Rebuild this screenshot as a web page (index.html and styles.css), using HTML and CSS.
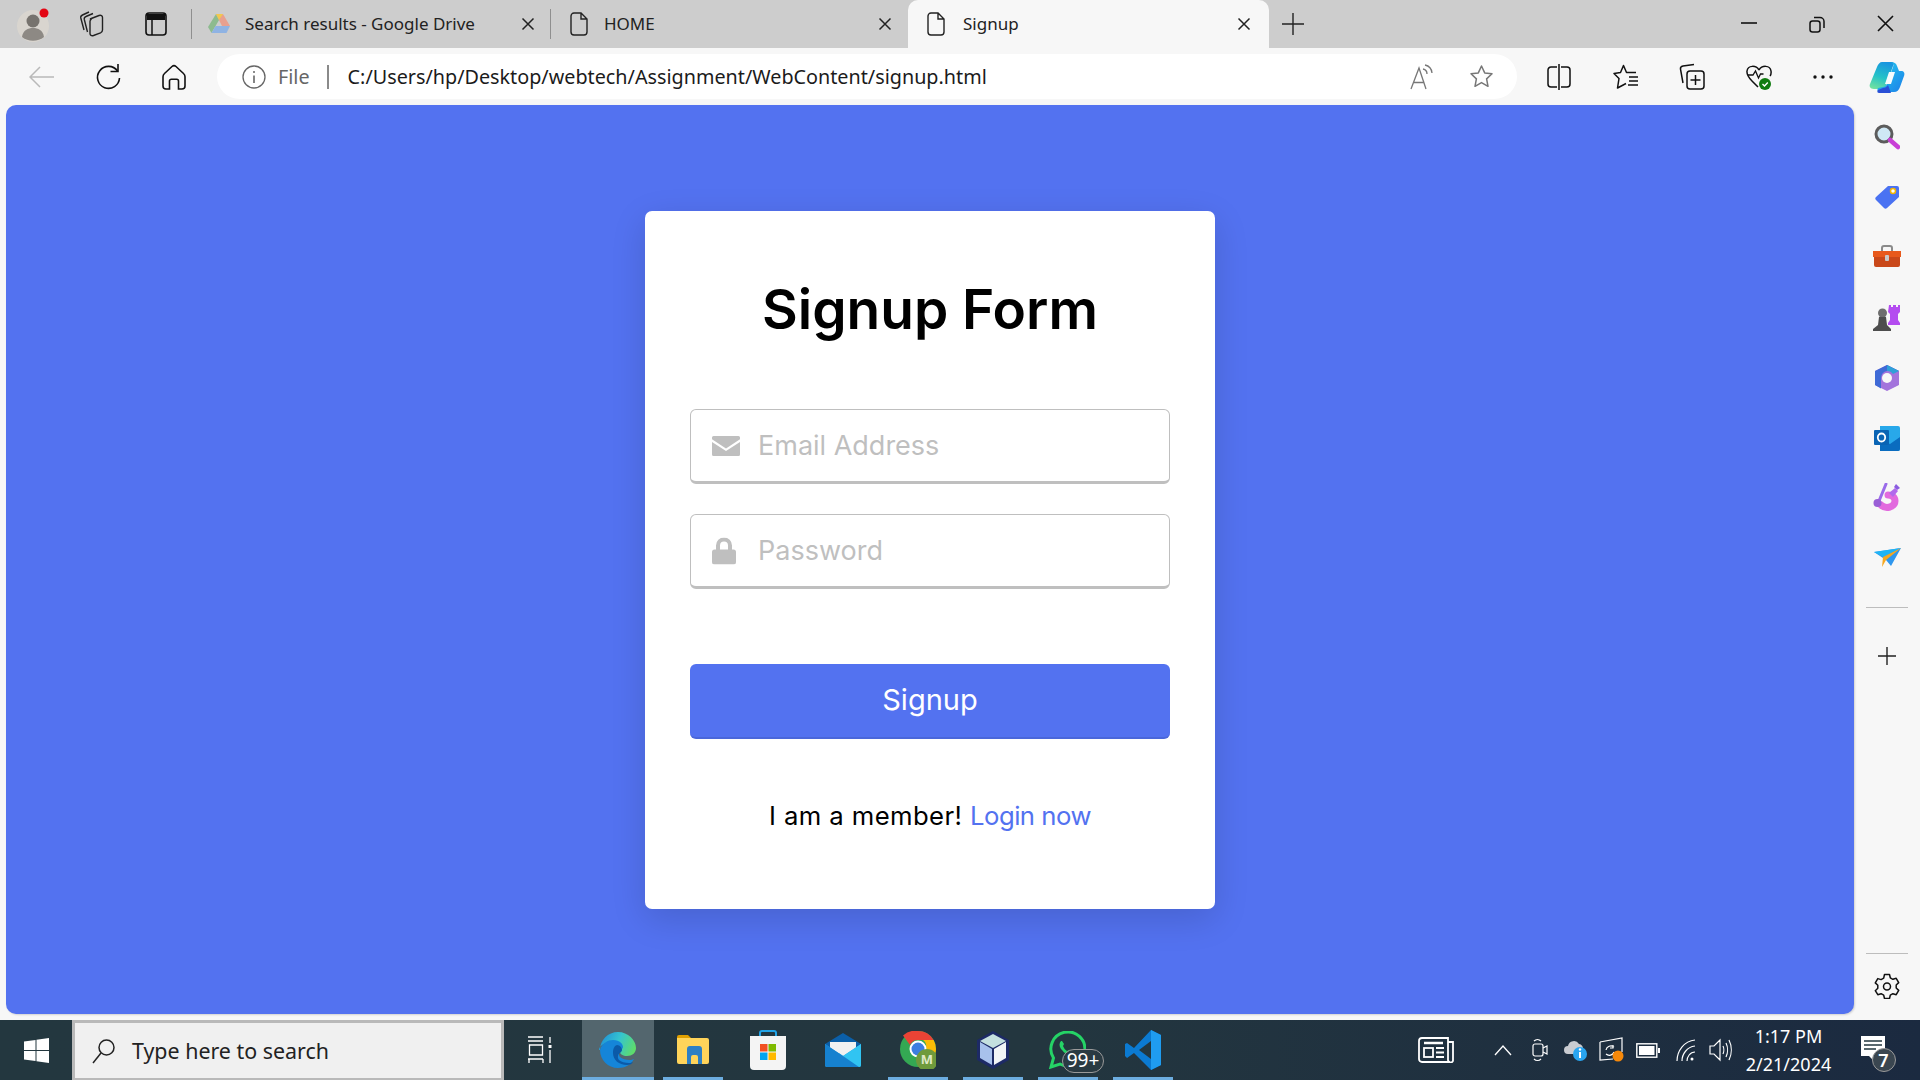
FILE: index.html
```html
<!DOCTYPE html>
<html lang="en">
<head>
	<meta charset="UTF-8">
	<link rel="stylesheet" href="styles.css">
	<title>Signup</title>
</head>
<body>
	<div class="tabstrip">
		<div class="strip-btn profile">
			<svg width="40" height="40" viewBox="0 0 40 40"><circle cx="19" cy="22" r="16" fill="#d9d5cf"/><circle cx="19" cy="17" r="6.5" fill="#77736e"/><path d="M8 33c1-7 6-9 11-9s10 2 11 9c-6 5-16 5-22 0z" fill="#8d8984"/><circle cx="30" cy="9" r="4.5" fill="#e30613"/></svg>
		</div>
		<div class="strip-btn collections-btn">
			<svg width="26" height="27" viewBox="0 0 26 27" fill="none" stroke="#222" stroke-width="1.400"><path d="M11 8l9-3.500c2-.7 3.500.3 3.500 2V19c0 1.500-.8 2.300-2 2.800l-7 2.700c-2 .7-3.500-.3-3.500-2V10.500c0-1.200.5-2 1.500-2.500z"/><path d="M14 2.500 7 5.500c-1.500.6-2 1.600-1.700 3L8.500 21"/><path d="M10 1 3.500 4C2 4.700 1.500 5.700 1.800 7L5 19"/></svg>
		</div>
		<div class="strip-btn vtabs-btn">
			<svg width="24" height="26" viewBox="0 0 24 26"><rect x="2" y="2" width="20" height="22" rx="3" fill="none" stroke="#111" stroke-width="1.600"/><path d="M3 3h18v6H3z" fill="#111"/><path d="M8 9v15" stroke="#111" stroke-width="1.500"/></svg>
		</div>
		<div class="tab-sep"></div>
		<div class="tab tab-drive">
			<svg class="tab-icon" width="24" height="22" viewBox="0 0 24 22"><path d="M16 1l7 12h-8L9 1z" fill="#e8a08f"/><path d="M9 1 1 14l3.500 6L12 7z" fill="#8dbb8f"/><path d="M9 1h7l-4 6z" fill="#f2c84f"/><path d="M4.500 20h15l3.500-7H8.500z" fill="#8fb3e3"/></svg>
			<span class="tab-title">Search results - Google Drive</span>
			<svg class="tab-x" width="14" height="14" viewBox="0 0 14 14"><path d="M1.500 1.500l11 11m0-11l-11 11" stroke="#222" stroke-width="1.500"/></svg>
		</div>
		<div class="tab-sep"></div>
		<div class="tab tab-home">
			<svg class="tab-icon doc" width="18" height="24" viewBox="0 0 18 24"><path d="M4 1h7l6 6v13a3 3 0 0 1-3 3H4a3 3 0 0 1-3-3V4a3 3 0 0 1 3-3zM11 1v6h6" fill="none" stroke="#222" stroke-width="1.400"/></svg>
			<span class="tab-title">HOME</span>
			<svg class="tab-x" width="14" height="14" viewBox="0 0 14 14"><path d="M1.500 1.500l11 11m0-11l-11 11" stroke="#222" stroke-width="1.500"/></svg>
		</div>
		<div class="tab tab-active">
			<svg class="tab-icon doc" width="18" height="24" viewBox="0 0 18 24"><path d="M4 1h7l6 6v13a3 3 0 0 1-3 3H4a3 3 0 0 1-3-3V4a3 3 0 0 1 3-3zM11 1v6h6" fill="none" stroke="#222" stroke-width="1.400"/></svg>
			<span class="tab-title">Signup</span>
			<svg class="tab-x" width="14" height="14" viewBox="0 0 14 14"><path d="M1.500 1.500l11 11m0-11l-11 11" stroke="#222" stroke-width="1.500"/></svg>
		</div>
		<div class="new-tab">
			<svg width="22" height="22" viewBox="0 0 22 22"><path d="M11 0v22M0 11h22" stroke="#222" stroke-width="1.400"/></svg>
		</div>
		<div class="win-controls">
			<div class="win-btn"><svg width="16" height="16" viewBox="0 0 16 16"><path d="M0 8h16" stroke="#111" stroke-width="1.600"/></svg></div>
			<div class="win-btn"><svg width="16" height="18" viewBox="0 0 16 18" fill="none" stroke="#111" stroke-width="1.500"><rect x="1" y="6" width="10" height="11" rx="2.500"/><path d="M5 2.500h6a4 4 0 0 1 4 4V13"/></svg></div>
			<div class="win-btn"><svg width="17" height="17" viewBox="0 0 17 17"><path d="M1 1l15 15m0-15L1 16" stroke="#111" stroke-width="1.600"/></svg></div>
		</div>
	</div>

	<div class="toolbar">
		<div class="tool-btn back"><svg width="26" height="24" viewBox="0 0 26 24" fill="none" stroke="#b9b9b9" stroke-width="1.500"><path d="M25 12H1M11 2 1 12l10 10"/></svg></div>
		<div class="tool-btn refresh"><svg width="26" height="28" viewBox="0 0 26 28" fill="none" stroke="#111" stroke-width="1.600"><path d="M22.500 8A11 11 0 1 0 24.500 15"/><path d="M23 1v7.500h-7.500"/></svg></div>
		<div class="tool-btn home"><svg width="24" height="26" viewBox="0 0 24 26" fill="none" stroke="#111" stroke-width="1.600"><path d="M10 2.500 2.500 9.500c-.9.800-1.500 2-1.500 3.200V22c0 1.600 1.200 3 3 3h3.500v-8c0-1 .8-1.800 1.800-1.800h5.400c1 0 1.800.8 1.800 1.800v8H20c1.800 0 3-1.400 3-3v-9.300c0-1.200-.6-2.400-1.500-3.200L14 2.500c-1.200-1-2.800-1-4 0z"/></svg></div>
		<div class="addressbar">
			<svg class="addr-info" width="24" height="24" viewBox="0 0 24 24" fill="none" stroke="#666" stroke-width="1.300"><circle cx="12" cy="12" r="11"/><path d="M12 10.500v7.500" stroke-width="1.600"/><circle cx="12" cy="7" r="1" fill="#666" stroke="none"/></svg>
			<span class="addr-file">File</span>
			<span class="addr-sep"></span>
			<span class="addr-url">C:/Users/hp/Desktop/webtech/Assignment/WebContent/signup.html</span>
			<svg class="addr-read" width="24" height="28" viewBox="0 0 24 28" fill="none" stroke="#777" stroke-width="1.300"><path d="M1 26 9 5l7 21M3.500 19.500h11"/><path d="M13 6a5 5 0 0 1 4 5M15 2a9 9 0 0 1 7 8" /></svg>
			<svg class="addr-star" width="25" height="25" viewBox="0 0 25 25" fill="none" stroke="#777" stroke-width="1.500"><path d="M12.500 2l3.200 6.900 7.300.9-5.400 5.100 1.400 7.400-6.500-3.700L6 22.300l1.400-7.400L2 9.800l7.300-.9z" stroke-linejoin="round"/></svg>
		</div>
		<div class="tool-btn split"><svg width="24" height="26" viewBox="0 0 24 26" fill="none" stroke="#111" stroke-width="1.500"><path d="M10 3H4a3 3 0 0 0-3 3v14a3 3 0 0 0 3 3h6M14 3h6a3 3 0 0 1 3 3v14a3 3 0 0 1-3 3h-6M12 0v26"/></svg></div>
		<div class="tool-btn favs"><svg width="26" height="26" viewBox="0 0 26 26" fill="none" stroke="#111" stroke-width="1.500" stroke-linejoin="round"><path d="M23 8.500h-9.500l-3-7-3 7-6.500 1 5 5-1.500 9.500 8.500-4.500"/><path d="M16 13h9M16 17h9M15 21h10"/></svg></div>
		<div class="tool-btn colls"><svg width="26" height="28" viewBox="0 0 26 28" fill="none" stroke="#111" stroke-width="1.500"><path d="M15 1.500 4 3C2.500 3.300 1.200 4.500 1.500 6.200L4 20"/><rect x="8" y="8" width="17" height="18" rx="3"/><path d="M16.500 12v10M11.500 17h10"/></svg></div>
		<div class="tool-btn health"><svg width="26" height="28" viewBox="0 0 26 28"><path d="M13 7C10 2 2 2 1 8c-.5 4 2 7 5 10l6 6M13 7c3-5 11-5 12 1 .3 2-.2 4-1 5" fill="none" stroke="#111" stroke-width="1.500"/><path d="M2 12h5l2.500-4 3 7 2-4h3" fill="none" stroke="#111" stroke-width="1.300"/><circle cx="19" cy="21" r="6" fill="#107c10"/><path d="M16.500 21l2 2 3.300-3.500" fill="none" stroke="#fff" stroke-width="1.400"/></svg></div>
		<div class="tool-btn dots"><svg width="20" height="4" viewBox="0 0 20 4" fill="#111"><circle cx="2" cy="2" r="1.700"/><circle cx="10" cy="2" r="1.700"/><circle cx="18" cy="2" r="1.700"/></svg></div>
		<div class="tool-btn copilot"><svg width="36" height="34" viewBox="0 0 36 34"><defs><linearGradient id="cp1" x1=".6" y1="0" x2=".3" y2="1"><stop offset="0" stop-color="#1895e0"/><stop offset=".55" stop-color="#25c2c8"/><stop offset="1" stop-color="#6fe0a0"/></linearGradient><linearGradient id="cp2" x1="0" y1="0" x2="1" y2="1"><stop offset="0" stop-color="#0f77b8"/><stop offset=".35" stop-color="#22b4ee"/><stop offset="1" stop-color="#1c7ee8"/></linearGradient></defs><path d="M13 2h9c3 0 3 2 2 4L17 26c-1 2-3 3-5 3H5c-4 0-5-3-4-5L8 7c1-3 3-5 5-5z" fill="url(#cp1)"/><path d="M22 2c3 0 5 1 6 4l2 5h2c3 0 4 2 3 5l-4 11c-1 3-3 5-6 5H11c-3 0-3-2-2-4l5-1c2 0 3-1 4-3L24 7c1-2 0-4-2-5z" fill="url(#cp2)"/><path d="M9 30l5-2c2 0 4-1 5-3l3 8H11c-3 0-3-1-2-3z" fill="#2a4fd6"/><path d="M20 12h6l-4 12h-6z" fill="#f7fbfd"/></svg></div>
	</div>

	<div class="workspace">
		<div class="page">
			<div class="card">
				<h1 class="card-title">Signup Form</h1>
				<form class="signup-form">
					<div class="field">
						<svg class="field-icon" width="28" height="20" viewBox="0 0 28 20" fill="#bfbfbf"><path d="M1.500 0h25A1.500 1.500 0 0 1 28 1.500v1.800L14 12.500 0 3.300V1.500A1.500 1.500 0 0 1 1.500 0z"/><path d="M0 6l14 9 14-9v12.500a1.500 1.500 0 0 1-1.500 1.500h-25A1.500 1.500 0 0 1 0 18.500z"/></svg>
						<input class="field-input" type="text" placeholder="Email Address">
					</div>
					<div class="field">
						<svg class="field-icon" width="24" height="27" viewBox="0 0 24 27" fill="#bfbfbf"><path d="M12 0a8 8 0 0 1 8 8v4h1.500a2.500 2.500 0 0 1 2.500 2.500v10a2.500 2.500 0 0 1-2.500 2.500h-19A2.500 2.500 0 0 1 0 24.500v-10A2.500 2.500 0 0 1 2.500 12H4V8a8 8 0 0 1 8-8zm0 4a4 4 0 0 0-4 4v4h8V8a4 4 0 0 0-4-4z"/></svg>
						<input class="field-input" type="password" placeholder="Password">
					</div>
					<button class="signup-btn" type="button">Signup</button>
				</form>
				<p class="member-text">I am a member! <a href="#">Login now</a></p>
			</div>
		</div>

		<div class="sidebar">
			<div class="side-btn"><svg width="26" height="26" viewBox="0 0 26 26"><circle cx="10" cy="10" r="8" fill="#cfe8f5" stroke="#5c5c5c" stroke-width="3"/><path d="M16 16l8 7" stroke="#c83fd6" stroke-width="4.500" stroke-linecap="round"/></svg></div>
			<div class="side-btn"><svg width="26" height="26" viewBox="0 0 26 26"><path d="M14 2h9a2 2 0 0 1 2 2v9L13 24c-1 1-2 1-3 0l-8-8c-1-1-1-2 0-3z" fill="#4a72f2"/><circle cx="19" cy="7" r="2.500" fill="#fff" stroke="#f4b400" stroke-width="1.500"/></svg></div>
			<div class="side-btn"><svg width="28" height="24" viewBox="0 0 28 24"><path d="M9 7V3a2 2 0 0 1 2-2h6a2 2 0 0 1 2 2v4" fill="none" stroke="#8a8a8a" stroke-width="2"/><path d="M0 6h28v6H0z" fill="#e8591c"/><path d="M1 12h26v8a2 2 0 0 1-2 2H3a2 2 0 0 1-2-2z" fill="#c9481a"/><rect x="12" y="10" width="4" height="6" rx="1" fill="#c9c9c9"/></svg></div>
			<div class="side-btn"><svg width="28" height="28" viewBox="0 0 28 28"><path d="M16 1h2v2h2V1h3v2h2V1h2v7l-2 2v6l2 3v2H15v-2l2-3v-6l-2-2z" fill="#b44cf0"/><circle cx="9.500" cy="9" r="4.500" fill="#6e6e6e"/><path d="M6 13h7l1 8 4 4v2H0v-2l5-4z" fill="#4d4d4d"/></svg></div>
			<div class="side-btn"><svg width="26" height="28" viewBox="0 0 26 28"><path d="M13 1 1 7v14l12 6 12-6V7z" fill="#a374dc"/><path d="M13 1 1 7v14l6 3.500V14a7 7 0 0 1 6-7l12 0z" fill="#3f6ad6"/><path d="M13 1l12 6-6 3a7 7 0 0 0-6-3z" fill="#2fa0d8"/><circle cx="13" cy="14" r="5" fill="#f7f7f7"/></svg></div>
			<div class="side-btn"><svg width="26" height="26" viewBox="0 0 26 26"><path d="M6 1h18a2 2 0 0 1 2 2v21a2 2 0 0 1-2 2H6z" fill="#28a8ea"/><path d="M6 14l10 5 10-7v12a2 2 0 0 1-2 2H6z" fill="#0a6cbf"/><rect x="0" y="5" width="15" height="15" rx="1" fill="#0a64b4"/><ellipse cx="7.500" cy="12.500" rx="3.700" ry="4" fill="none" stroke="#fff" stroke-width="1.800"/></svg></div>
			<div class="side-btn"><svg width="28" height="30" viewBox="0 0 28 30" fill="none"><path d="M15 12c4 0 7 2 7 6 0 3-2 5-5 6-4 1-7 0-9-2" stroke="#e26ade" stroke-width="7" stroke-linecap="round"/><path d="M13 1 6 18" stroke="#9a6bea" stroke-width="3" stroke-linecap="round"/><circle cx="4.500" cy="20" r="4" fill="#9a5fd6"/><path d="M16 10l6-5 3 3-5 6z" fill="#b169ec"/><path d="M23 1l4 4-3 2-3-3z" fill="#8a5ce0"/></svg></div>
			<div class="side-btn"><svg width="27" height="20" viewBox="0 0 27 20"><path d="M0 4 27 0 17 18l-5-6z" fill="#2f97ee"/><path d="M0 4l27-4L9 9z" fill="#1fb4f5"/><path d="M9 9l18-9-15 12-4 7z" fill="#f6a821"/></svg></div>
			<div class="side-rule"></div>
			<div class="side-btn side-add"><svg width="18" height="18" viewBox="0 0 18 18"><path d="M9 0v18M0 9h18" stroke="#222" stroke-width="1.400"/></svg></div>
			<div class="side-spacer"></div>
			<div class="side-rule side-rule-low"></div>
			<div class="side-btn side-gear"><svg width="26" height="26" viewBox="0 0 26 26" fill="none" stroke="#111" stroke-width="1.500" stroke-linejoin="round"><path d="M10.500 1.500h5l.8 3.300 2.600 1.500 3.300-1 2.500 4.300-2.500 2.400v3l2.500 2.400-2.500 4.300-3.300-1-2.600 1.500-.8 3.300h-5l-.8-3.300-2.600-1.500-3.300 1L1.300 17.700l2.500-2.400v-3L1.300 9.900 3.800 5.600l3.300 1 2.600-1.500z"/><circle cx="13" cy="13.500" r="3.500"/></svg></div>
		</div>
	</div>

	<div class="taskbar">
		<div class="start-btn"><svg width="25" height="25" viewBox="0 0 25 25" fill="#fff"><path d="M0 3.600 11.500 2v10H0zM12.500 1.800 25 0v12H12.500zM0 13h11.500v10L0 21.400zM12.500 13H25v12l-12.500-1.800z"/></svg></div>
		<div class="task-search">
			<svg width="24" height="26" viewBox="0 0 24 26" fill="none" stroke="#222" stroke-width="1.500"><circle cx="14.500" cy="9.500" r="7.500"/><path d="M9 15 1 25"/></svg>
			<span>Type here to search</span>
		</div>
		<div class="task-view"><svg width="24" height="28" viewBox="0 0 24 28" fill="none" stroke="#fff" stroke-width="1.300"><path d="M0 1h15M0 5h15M1.500 9h13v10h-13zM0 23h15M1 23v4M15 23v4M22 1v6M22 14v13"/><rect x="20.500" y="9" width="3" height="3" fill="#fff" stroke="none"/></svg></div>
		<div class="task-app app-open app-current"><svg width="38" height="38" viewBox="0 0 38 38"><defs><linearGradient id="edge1" x1="0" y1=".3" x2="1" y2=".6"><stop offset="0" stop-color="#1f8fd8"/><stop offset=".5" stop-color="#35c4cf"/><stop offset="1" stop-color="#5fdc6a"/></linearGradient></defs><path d="M1 19C1 9 9 1 19 1c10 0 18 8 18 16 0 5-4 8-9 8-4 0-7-2-7-4 0-1 1-1.500 1-3 0-3-3-7-9-7-7 0-13 4-13 8z" fill="url(#edge1)"/><path d="M1 19c2-7 8-10 13-10 7 0 10 4 10 7 0 1-1 2-2 3-2 1-3 4-1 7 2 2 6 3 10 3 1 0 3-.5 4-1-3 6-9 9-16 9C9 37 1 29 1 19z" fill="#1585d8"/><path d="M14 22c0 7 6 12 14 12 3 0 5-1 6-3-1 .5-3 1-4 1-4 0-8-1-10-3-2-3-1-6 1-7 1-1 2-2 2-3 0-2-2-5-5-5-3 1-4 4-4 8z" fill="#0b5aa8"/></svg></div>
		<div class="task-app app-open app-stacked"><svg width="32" height="32" viewBox="0 0 32 32"><path d="M0 3a2 2 0 0 1 2-2h9l3 3h-14z" fill="#e0a000"/><path d="M0 4h30a2 2 0 0 1 2 2v22a2 2 0 0 1-2 2H2a2 2 0 0 1-2-2z" fill="#ffd45a"/><path d="M10 15a3 3 0 0 1 3-3h9a3 3 0 0 1 3 3v15h-4v-7a2 2 0 0 0-2-2h-3a2 2 0 0 0-2 2v7h-4z" fill="#2d7fc4"/></svg></div>
		<div class="task-app"><svg width="36" height="40" viewBox="0 0 36 40"><path d="M10 8V3a2 2 0 0 1 2-2h12a2 2 0 0 1 2 2v5" fill="none" stroke="#21a4e8" stroke-width="2"/><path d="M0 6h36v30a4 4 0 0 1-4 4H4a4 4 0 0 1-4-4z" fill="#f4f4f4"/><rect x="10" y="14" width="7.500" height="7.500" fill="#f25022"/><rect x="18.500" y="14" width="7.500" height="7.500" fill="#7fba00"/><rect x="10" y="22.500" width="7.500" height="7.500" fill="#00a4ef"/><rect x="18.500" y="22.500" width="7.500" height="7.500" fill="#ffb900"/></svg></div>
		<div class="task-app"><svg width="36" height="34" viewBox="0 0 36 34"><path d="M18 0 36 11v3H0v-3z" fill="#0b5fa8"/><path d="M5 9h26v8L18 24 5 17z" fill="#f1f1f1"/><path d="M0 11l18 12 18-12v21a2 2 0 0 1-2 2H2a2 2 0 0 1-2-2z" fill="#2aa8e8"/><path d="M36 11v21a2 2 0 0 1-2 2H18L14 20l4 3z" fill="#31c4f2"/><path d="M0 32V11l18 12L34 34H2a2 2 0 0 1-2-2z" fill="#1681cf"/></svg></div>
		<div class="task-app app-open">
			<svg width="36" height="38" viewBox="0 0 36 38"><circle cx="18" cy="18" r="18" fill="#34a853"/><path d="M18 0a18 18 0 0 1 15.600 9H18a9 9 0 0 0-8 5L3 4.500A18 18 0 0 1 18 0z" fill="#ea4335"/><path d="M33.600 9A18 18 0 0 1 36 18c0 3-1 6-3 9l-7-10a8 8 0 0 0-3-8z" fill="#fbbc05"/><circle cx="18" cy="18" r="8.500" fill="#fff"/><circle cx="18" cy="18" r="6.500" fill="#3c7ee0"/><circle cx="27" cy="29" r="11" fill="#6f9a3c"/><text x="27" y="33" class="chrome-m">M</text></svg>
		</div>
		<div class="task-app app-open"><svg width="34" height="38" viewBox="0 0 34 38"><path d="M17 0 33 9v20l-16 9-16-9V9z" fill="#1d2a66"/><path d="M17 3 30 10 17 17 4 10z" fill="#c5e0df"/><path d="M4 11l12 7v16L4 27z" fill="#a8c1ec"/><path d="M30 11 18 18v16l12-7z" fill="#f2f4f6"/></svg></div>
		<div class="task-app app-open app-badged">
			<svg class="whatsapp" width="38" height="38" viewBox="0 0 38 38"><path d="M3 36l2.500-9A17 17 0 1 1 12 33z" fill="#23373f" stroke="#25d366" stroke-width="3"/><path d="M13 10c-2 2-2 5 0 8l1 1c2 3 5 5 8 5 2 0 3-2 3-3l-4-2-2 1c-2-1-3-3-4-5l1-2-2-3z" fill="#25d366"/></svg>
			<span class="app-badge">99+</span>
		</div>
		<div class="task-app app-open"><svg width="36" height="40" viewBox="0 0 36 40"><path d="M26 0 36 5v30l-10 5-17-17-7 5-2-2V14l2-1 7 5z" fill="#0b7ad1"/><path d="M26 0 36 5v30l-10 5z" fill="#1f9cf0"/><path d="M26 11 14 20l12 9z" fill="#23373f"/></svg></div>
		<div class="tray">
			<svg class="tray-news" width="36" height="26" viewBox="0 0 36 26" fill="none" stroke="#fff" stroke-width="1.800"><path d="M4 1h26v22a2 2 0 0 0 2 2H4a3 3 0 0 1-3-3V4a3 3 0 0 1 3-3z"/><path d="M30 5h5v18a2 2 0 0 1-3 2"/><path d="M6 6h19" stroke-width="2.500"/><rect x="6" y="11" width="9" height="9"/><path d="M18 11h8M18 15.500h8M18 20h8"/></svg>
			<svg class="tray-chevron" width="18" height="12" viewBox="0 0 18 12"><path d="M1 11 9 2l8 9" fill="none" stroke="#fff" stroke-width="1.300"/></svg>
			<svg class="tray-meet" width="16" height="26" viewBox="0 0 16 26" fill="none" stroke="#fff" stroke-width="1.200"><rect x="1" y="7" width="10" height="12" rx="2"/><path d="M11 11l4-2v8l-4-2M2 4c2-2 5-2 7 0M2 22c2 2 5 2 7 0"/></svg>
			<svg class="tray-cloud" width="26" height="24" viewBox="0 0 26 24"><path d="M5 16a4 4 0 0 1 0-8 6 6 0 0 1 11-2 5 5 0 0 1 4 5v5z" fill="#c9ccd1"/><circle cx="17" cy="16" r="7" fill="#29a5f0"/><path d="M17 14v6" stroke="#fff" stroke-width="2"/><circle cx="17" cy="11.500" r="1.200" fill="#fff"/></svg>
			<svg class="tray-update" width="26" height="26" viewBox="0 0 26 26" fill="none" stroke="#fff" stroke-width="1.200"><path d="M1 5l22-4v14M1 5v18l13-1"/><path d="M7 13a5 5 0 0 1 8-3M14 8v3h-3M15 15a5 5 0 0 1-8 2"/><circle cx="19" cy="19" r="5.500" fill="#f7890a" stroke="none"/></svg>
			<svg class="tray-battery" width="24" height="15" viewBox="0 0 24 15"><rect x=".8" y=".8" width="20" height="13.400" fill="none" stroke="#fff" stroke-width="1.400"/><rect x="3" y="3" width="15.500" height="9" fill="#fff"/><rect x="22" y="5" width="2" height="5" fill="#fff"/></svg>
			<svg class="tray-wifi" width="20" height="22" viewBox="0 0 20 22" fill="none" stroke="#fff" stroke-width="1.200"><path d="M1 22C1 12 8 2 19 1M6 22c0-7 5-14 13-15M11 22c0-4 3-9 8-9"/><circle cx="16" cy="20" r="1.500" fill="#fff" stroke="none"/></svg>
			<svg class="tray-volume" width="23" height="24" viewBox="0 0 23 24" fill="none" stroke="#fff" stroke-width="1.200"><path d="M1 8h4l6-6v20l-6-6H1zM14 8c1 2 1 6 0 8M17 5c2 4 2 10 0 14M20 2c3 6 3 14 0 20"/></svg>
			<div class="tray-clock"><span>1:17 PM</span><span>2/21/2024</span></div>
			<div class="tray-notify">
				<svg width="26" height="28" viewBox="0 0 26 28"><path d="M0 0h24v20h-8l-2 6-6-6H0z" fill="#fff"/><path d="M3 5h18M3 9h18M3 13h12" stroke="#23373f" stroke-width="1.300"/></svg>
				<span class="notify-badge">7</span>
			</div>
		</div>
	</div>
</body>
</html>
```
FILE: styles.css
```css
* {
	box-sizing: border-box;
}
body {
	margin: 0;
	width: 1920px;
	height: 1080px;
	display: flex;
	flex-direction: column;
	overflow: hidden;
	background: #f7f7f7;
	font-family: "Noto Sans", sans-serif;
}
svg {
	display: block;
	flex: none;
}

/* tab strip */
.tabstrip {
	height: 48px;
	flex: none;
	display: flex;
	align-items: center;
	background: #cdcdcd;
}
.strip-btn {
	display: flex;
	justify-content: center;
}
.profile {
	width: 66px;
	padding-left: 2px;
}
.collections-btn {
	width: 58px;
	padding-right: 6px;
}
.vtabs-btn {
	width: 64px;
}
.tab-sep {
	width: 1px;
	height: 30px;
	background: #8f8f8f;
	margin-left: 3px;
}
.tab {
	height: 48px;
	display: flex;
	align-items: center;
	font-size: 17px;
	color: #222;
}
.tab-drive {
	width: 355px;
	padding: 0 12px 0 15px;
}
.tab-home {
	width: 356.500px;
	padding: 0 15.500px 0 15px;
}
.tab-active {
	width: 361.500px;
	padding: 0 18px 0 17.500px;
	background: #f7f7f7;
	border-radius: 10px 10px 0 0;
}
.tab-icon {
	margin-right: 14px;
}
.tab-icon.doc {
	margin-left: 4px;
	margin-right: 16px;
}
.tab-active .tab-icon.doc {
	margin-left: 2px;
	margin-right: 18px;
}
.tab-title {
	flex: 1;
	padding-bottom: 2px;
	white-space: nowrap;
}
.new-tab {
	margin-left: 13px;
}
.win-controls {
	margin-left: auto;
	display: flex;
}
.win-btn {
	width: 68.500px;
	display: flex;
	justify-content: center;
}

/* toolbar */
.toolbar {
	height: 57px;
	flex: none;
	display: flex;
	align-items: center;
	background: #f7f7f7;
}
.tool-btn {
	display: flex;
	justify-content: center;
}
.back {
	width: 76px;
	padding-left: 8px;
}
.refresh {
	width: 65px;
	padding-right: 2px;
}
.home {
	width: 65px;
	margin-right: 11px;
}
.addressbar {
	width: 1300px;
	height: 45px;
	display: flex;
	align-items: center;
	padding: 0 23px 0 25px;
	background: #fff;
	border-radius: 23px;
	font-size: 19.770px;
}
.addr-file {
	margin-left: 12px;
	color: #666;
}
.addr-sep {
	width: 2px;
	height: 24px;
	background: #8a8a8a;
	margin: 0 19px 0 17px;
}
.addr-url {
	flex: 1;
	color: #1b1b1b;
	white-space: nowrap;
}
.addr-read {
	margin-right: 35px;
}
.split {
	width: 84px;
}
.favs {
	width: 50px;
}
.colls {
	width: 82px;
}
.health {
	width: 52px;
}
.dots {
	width: 76px;
}
.copilot {
	width: 52px;
}

/* page + edge sidebar */
.workspace {
	flex: 1;
	display: flex;
	min-height: 0;
	padding-left: 6px;
	padding-bottom: 6px;
}
.page {
	width: 1848px;
	display: flex;
	align-items: center;
	justify-content: center;
	background: #5372f0;
	border-radius: 10px;
	box-shadow: 1px 1px 2px rgba(0, 0, 0, 0.15);
}
.card {
	width: 570px;
	height: 698px;
	padding: 68px 45px 0;
	background: #fff;
	border-radius: 7px;
	box-shadow: 0 10px 35px rgba(0, 0, 0, 0.14);
}
.card-title {
	margin: 0 0 70px;
	font-family: "Inter", sans-serif;
	font-size: 55px;
	font-weight: 600;
	line-height: 60px;
	text-align: center;
	color: #000;
}
.signup-form {
	display: flex;
	flex-direction: column;
	gap: 30px;
}
.field {
	position: relative;
	height: 75px;
}
.field-icon {
	position: absolute;
	left: 22px;
	top: 50%;
	transform: translateY(-50%);
}
.field-input {
	width: 100%;
	height: 100%;
	padding: 0 20px 0 67px;
	border: 1px solid #bfbfbf;
	border-bottom-width: 3px;
	border-radius: 6px;
	outline: none;
	font-family: "Inter", sans-serif;
	font-size: 27px;
}
.field-input::placeholder {
	color: #bfbfbf;
}
.signup-btn {
	height: 75px;
	margin-top: 45px;
	padding-bottom: 3px;
	border: 0;
	border-bottom: 2px solid #4a67da;
	border-radius: 6px;
	background: #5372f0;
	color: #fff;
	font-family: "Inter", sans-serif;
	font-size: 29px;
}
.member-text {
	margin: 60px 0 0;
	font-family: "Inter", sans-serif;
	font-size: 25.700px;
	letter-spacing: 0.4px;
	line-height: 34px;
	text-align: center;
	color: #000;
}
.member-text a {
	color: #5372f0;
	letter-spacing: -0.5px;
	text-decoration: none;
}
.sidebar {
	flex: 1;
	display: flex;
	flex-direction: column;
	align-items: center;
}
.side-btn {
	width: 100%;
	height: 60.200px;
	flex: none;
	display: flex;
	justify-content: center;
	align-items: center;
}
.side-btn:first-child {
	margin-top: 2px;
}
.side-rule {
	width: 42px;
	height: 1px;
	flex: none;
	background: #bdbdbd;
	margin-top: 18px;
}
.side-add {
	margin-top: 18px;
}
.side-spacer {
	flex: 1;
}
.side-rule-low {
	margin-top: 0;
}
.side-gear {
	height: 56px;
	margin-top: 4px;
}

/* windows taskbar */
.taskbar {
	height: 60px;
	flex: none;
	display: flex;
	align-items: center;
	background: linear-gradient(90deg, #23373f 0%, #23363f 55%, #1b2a40 100%);
	color: #fff;
}
.start-btn {
	width: 72px;
	display: flex;
	justify-content: center;
}
.task-search {
	width: 432px;
	height: 60px;
	display: flex;
	align-items: center;
	gap: 16px;
	padding-left: 17px;
	background: #f0f0f0;
	border: 3px solid #b9b9b9;
	border-bottom-width: 2px;
	font-size: 21.400px;
	color: #222;
}
.task-view {
	width: 78px;
	padding-right: 6px;
	display: flex;
	justify-content: center;
}
.task-app {
	position: relative;
	width: 72px;
	height: 60px;
	margin-right: 3px;
	display: flex;
	align-items: center;
	justify-content: center;
}
.app-open::after {
	content: "";
	position: absolute;
	left: 6px;
	right: 6px;
	bottom: 0;
	height: 3px;
	background: #6cade0;
}
.app-current {
	background: #53666e;
}
.app-current::after {
	left: 0;
	right: 0;
}
.whatsapp {
	margin-right: 3px;
}
.chrome-m {
	font-size: 13px;
	font-weight: 700;
	fill: #dfe8c8;
	text-anchor: middle;
	font-family: "Noto Sans", sans-serif;
}
.app-badge {
	position: absolute;
	left: 30px;
	top: 29px;
	width: 42px;
	height: 24px;
	border: 1px solid #9a9a9a;
	border-radius: 12px;
	background: #2a3a42;
	font-size: 19px;
	line-height: 21px;
	text-align: center;
}
.tray {
	flex: 1;
	display: flex;
	align-items: center;
	padding-left: 236px;
}
.tray-news {
	margin-right: 39.500px;
}
.tray-chevron {
	margin-right: 20px;
}
.tray-meet {
	margin-right: 15px;
}
.tray-cloud {
	margin-right: 10px;
}
.tray-update {
	margin-right: 11px;
}
.tray-battery {
	margin-right: 16px;
}
.tray-wifi {
	margin-right: 13px;
}
.tray-volume {
	margin-right: 8px;
}
.tray-clock {
	width: 98px;
	display: flex;
	flex-direction: column;
	align-items: center;
	gap: 6px;
	font-size: 18px;
	line-height: 22px;
}
.tray-notify {
	position: relative;
	margin-left: 23px;
}
.notify-badge {
	position: absolute;
	left: 11px;
	top: 12px;
	width: 24px;
	height: 24px;
	border: 1px solid #9a9a9a;
	border-radius: 50%;
	background: #3a4650;
	font-size: 18px;
	font-weight: 600;
	line-height: 22px;
	text-align: center;
}
```
